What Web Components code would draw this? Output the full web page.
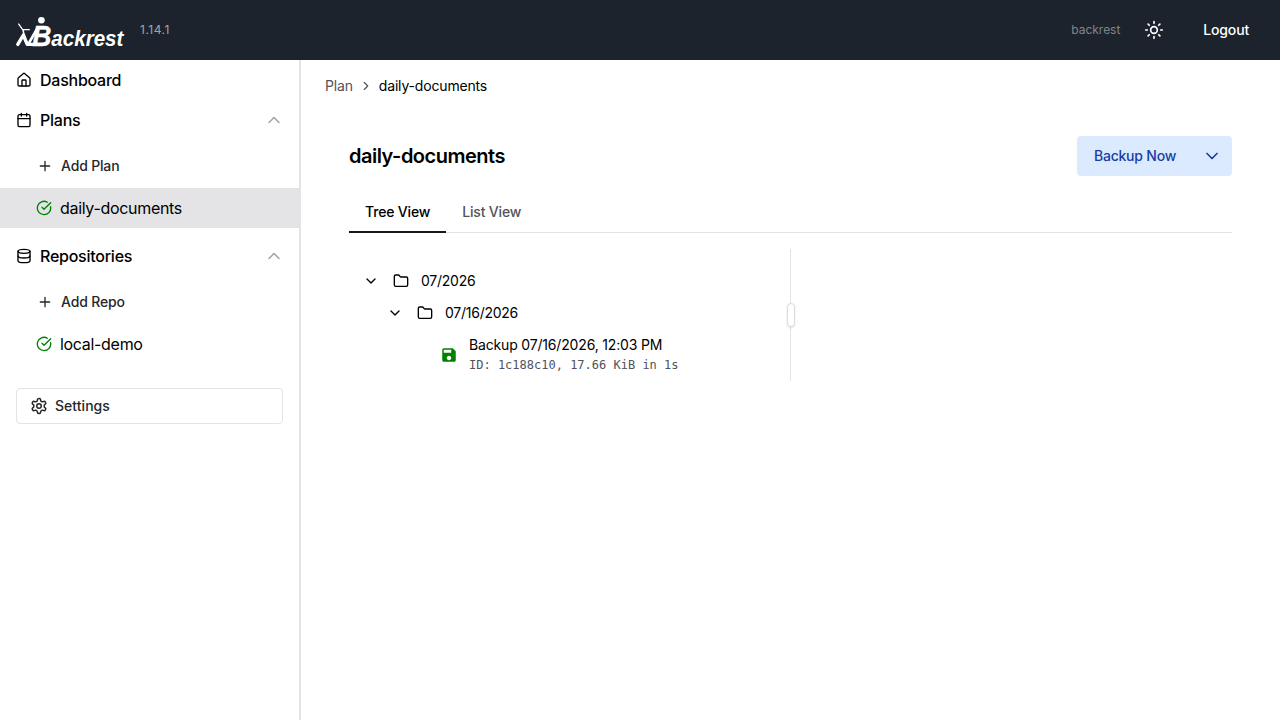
<!DOCTYPE html>
<html lang="en">
<head>
<meta charset="utf-8">
<title>Backrest</title>
<style>
	body {
		margin: 0;
		height: 100vh;
		overflow: hidden;
		background: #fff;
		color: #000;
		font: 400 14px/20px Inter, sans-serif;
		letter-spacing: -.17px;
	}
</style>
</head>
<body>
<br-app></br-app>

<script>
const define = (name, html, setup) => {
	!customElements.get(name) &&
	customElements.define(name, class extends HTMLElement {
		constructor() {
			super();
			this.sr = this.attachShadow({ mode: "open" });
		}

		connectedCallback() {
			this.sr.innerHTML = typeof html === "function" ? html(this) : html;
			setup && setup(this);
		}
	});
};

const icons = {
	house: `<path d="M15 21v-8a1 1 0 0 0-1-1h-4a1 1 0 0 0-1 1v8"/><path d="M3 10a2 2 0 0 1 .709-1.528l7-5.999a2 2 0 0 1 2.582 0l7 5.999A2 2 0 0 1 21 10v9a2 2 0 0 1-2 2H5a2 2 0 0 1-2-2z"/>`,
	calendar: `<path d="M8 2v4M16 2v4"/><rect width="18" height="18" x="3" y="4" rx="2"/><path d="M3 10h18"/>`,
	database: `<ellipse cx="12" cy="5" rx="9" ry="3"/><path d="M3 5v14a9 3 0 0 0 18 0V5"/><path d="M3 12a9 3 0 0 0 18 0"/>`,
	plus: `<path d="M5 12h14M12 5v14"/>`,
	check: `<path d="M21.801 10A10 10 0 1 1 17 3.335"/><path d="m9 11 3 3L22 4"/>`,
	settings: `<path d="M12.22 2h-.44a2 2 0 0 0-2 2v.18a2 2 0 0 1-1 1.73l-.43.25a2 2 0 0 1-2 0l-.15-.08a2 2 0 0 0-2.73.73l-.22.38a2 2 0 0 0 .73 2.73l.15.1a2 2 0 0 1 1 1.72v.51a2 2 0 0 1-1 1.74l-.15.09a2 2 0 0 0-.73 2.73l.22.38a2 2 0 0 0 2.73.73l.15-.08a2 2 0 0 1 2 0l.43.25a2 2 0 0 1 1 1.73V20a2 2 0 0 0 2 2h.44a2 2 0 0 0 2-2v-.18a2 2 0 0 1 1-1.73l.43-.25a2 2 0 0 1 2 0l.15.08a2 2 0 0 0 2.73-.73l.22-.39a2 2 0 0 0-.73-2.73l-.15-.08a2 2 0 0 1-1-1.74v-.5a2 2 0 0 1 1-1.74l.15-.09a2 2 0 0 0 .73-2.73l-.22-.38a2 2 0 0 0-2.73-.73l-.15.08a2 2 0 0 1-2 0l-.43-.25a2 2 0 0 1-1-1.73V4a2 2 0 0 0-2-2z"/><circle cx="12" cy="12" r="3"/>`,
	sun: `<circle cx="12" cy="12" r="4"/><path d="M12 2v2M12 20v2M4.93 4.93l1.41 1.41M17.66 17.66l1.41 1.41M2 12h2M20 12h2M6.34 17.66l-1.41 1.41M19.07 4.93l-1.41 1.41"/>`,
	folder: `<path d="M20 20a2 2 0 0 0 2-2V8a2 2 0 0 0-2-2h-7.9a2 2 0 0 1-1.69-.9L9.6 3.9A2 2 0 0 0 7.93 3H4a2 2 0 0 0-2 2v13a2 2 0 0 0 2 2Z"/>`,
	up: `<path stroke-width="1.8" d="m18 15-6-6-6 6"/>`,
	down: `<path d="m6 9 6 6 6-6"/>`,
	right: `<path d="m9 18 6-6-6-6"/>`,
	save: `<path fill="currentcolor" stroke="none" d="M17 3H5a2 2 0 0 0-2 2v14a2 2 0 0 0 2 2h14c1.1 0 2-.9 2-2V7l-4-4zm-5 16c-1.66 0-3-1.34-3-3s1.34-3 3-3 3 1.34 3 3-1.34 3-3 3zm3-10H5V5h10v4z"/>`,
};

// <br-icon name="plus" size="16">
define("br-icon", (el) => `
	<style>
		:host { display: inline-flex; flex: none; }
		svg {
			display: block;
			fill: none;
			stroke: currentcolor;
			stroke-width: 2;
			stroke-linecap: round;
			stroke-linejoin: round;
		}
	</style>
	<svg viewBox="0 0 24 24" width="${el.getAttribute("size") || 16}" height="${el.getAttribute("size") || 16}">${icons[el.getAttribute("name")]}</svg>
`);

define("br-logo", `
	<style>
		:host { display: block; width: 110px; height: 32px; letter-spacing: 0; }
		svg { display: block; overflow: visible; }
		text { font: italic 700 22.5px "Liberation Sans", Arial, sans-serif; fill: #fff; }
		.big { font-size: 29px; stroke: #fff; stroke-width: .4; }
	</style>
	<svg width="110" height="32" viewBox="0 0 110 32">
		<circle cx="25.4" cy="6.2" r="3.3" fill="#fff"/>
		<path d="M2.4 9.6 6.6 15.6H13.8" fill="none" stroke="#fff" stroke-width="1.3"/>
		<path d="M1.8 30.4 7.4 21 11.2 30.4H18" fill="none" stroke="#fff" stroke-width="3.4" stroke-linecap="round" stroke-linejoin="round"/>
		<path d="M7 15.6 8 21" fill="none" stroke="#fff" stroke-width="1.6"/>
		<path d="M12.4 30 22 13.2H26" fill="none" stroke="#fff" stroke-width="2.6" stroke-linecap="round" stroke-linejoin="round"/>
		<text x="16.2" y="32" textLength="91.2" lengthAdjust="spacingAndGlyphs"><tspan class="big">B</tspan>ackrest</text>
	</svg>
`);

define("br-header", `
	<style>
		:host {
			display: flex;
			align-items: center;
			box-sizing: border-box;
			height: 60px;
			padding: 0 16px;
			background: #1c232c;
			color: #fff;
		}
		small { font-size: 12px; line-height: 16px; color: rgba(255, 255, 255, .6); }
		.version { margin-left: 14px; letter-spacing: .5px; }
		.user { margin-left: auto; letter-spacing: -.02px; color: rgba(255, 255, 255, .45); }
		button {
			display: flex;
			align-items: center;
			justify-content: center;
			height: 36px;
			padding: 0 15px;
			border: none;
			background: none;
			color: inherit;
			font: 500 14px/20px Inter, sans-serif;
			letter-spacing: inherit;
		}
		.theme { width: 36px; padding: 0; margin: 0 16px; }
	</style>
	<br-logo></br-logo>
	<small class="version">1.14.1</small>
	<small class="user">backrest</small>
	<button class="theme"><br-icon name="sun" size="20"></br-icon></button>
	<button><slot></slot></button>
`);

define("br-section", (el) => `
	<style>
		:host { display: block; }
		.head {
			display: flex;
			align-items: center;
			gap: 8px;
			height: 40px;
			padding: 0 15.5px 0 16px;
			font: 500 16px/24px Inter, sans-serif;
			letter-spacing: -.25px;
		}
		.toggle { margin-left: auto; color: #a1a1aa; }
		.body { padding: 8px 0; display: flex; flex-direction: column; gap: 4px; }
	</style>
	<div class="head">
		<br-icon name="${el.getAttribute("icon")}"></br-icon>${el.getAttribute("label")}
		${el.hasAttribute("open") ? `<br-icon class="toggle" name="up" size="20"></br-icon>` : ""}
	</div>
	${el.hasAttribute("open") ? `<div class="body"><slot></slot></div>` : ""}
`);

define("br-add", `
	<style>
		:host {
			display: flex;
			align-items: center;
			gap: 8px;
			height: 36px;
			padding-left: 37px;
			color: #27272a;
			font-weight: 500;
		}
	</style>
	<br-icon name="plus"></br-icon><slot></slot>
`);

define("br-nav-item", `
	<style>
		:host {
			display: flex;
			align-items: center;
			gap: 8px;
			height: 40px;
			padding-left: 36px;
			font-size: 16px;
			line-height: 24px;
			letter-spacing: -.31px;
		}
		:host([selected]) { background: #e4e4e7; }
		br-icon { color: #008000; }
	</style>
	<br-icon name="check"></br-icon><slot></slot>
`);

define("br-sidebar", `
	<style>
		:host {
			display: block;
			box-sizing: border-box;
			flex: none;
			width: 301px;
			border-right: 2px solid #e4e4e7;
		}
		.settings {
			display: flex;
			align-items: center;
			gap: 7px;
			box-sizing: border-box;
			width: calc(100% - 32px);
			height: 36px;
			margin: 16px 16px 0;
			padding: 0 13px;
			border: 1px solid #e4e4e7;
			border-radius: 4px;
			background: #fff;
			color: #27272a;
			font: 500 14px/20px Inter, sans-serif;
			letter-spacing: .04px;
		}
	</style>
	<br-section icon="house" label="Dashboard"></br-section>
	<br-section icon="calendar" label="Plans" open>
		<br-add>Add Plan</br-add>
		<br-nav-item selected>daily-documents</br-nav-item>
	</br-section>
	<br-section icon="database" label="Repositories" open>
		<br-add>Add Repo</br-add>
		<br-nav-item>local-demo</br-nav-item>
	</br-section>
	<button class="settings"><br-icon name="settings" size="18"></br-icon>Settings</button>
`);

define("br-breadcrumb", `
	<style>
		:host { display: flex; align-items: center; gap: 6px; height: 20px; }
		.parent, br-icon { color: #52525b; }
	</style>
	<span class="parent">Plan</span>
	<br-icon name="right" size="14"></br-icon>
	<slot></slot>
`);

define("br-split-button", `
	<style>
		:host { display: flex; }
		button {
			display: flex;
			align-items: center;
			justify-content: center;
			box-sizing: border-box;
			height: 40px;
			padding: 0;
			border: none;
			border-radius: 4px;
			background: #dbeafe;
			color: #173da6;
			font: 500 14px/20px Inter, sans-serif;
			letter-spacing: -.22px;
		}
		.main { width: 116px; border-radius: 4px 1px 1px 4px; }
		.more { width: 39px; padding-right: 2px; border-radius: 1px 4px 4px 1px; }
	</style>
	<button class="main"><slot></slot></button>
	<button class="more"><br-icon name="down" size="20"></br-icon></button>
`);

define("br-tabs", `
	<style>
		:host { display: flex; height: 40px; border-bottom: 1px solid #e4e4e7; }
		::slotted(*) {
			box-sizing: border-box;
			height: 41px;
			padding: 10px 16px;
			font-weight: 500;
			color: #52525b;
		}
		::slotted([aria-selected=true]) { color: #000; border-bottom: 2px solid #18181b; }
	</style>
	<slot></slot>
`, (el) => {
	const tabs = [...el.children];
	tabs.forEach((tab) => {
		tab.addEventListener("click", () => {
			tabs.forEach((t) => t.setAttribute("aria-selected", t === tab));
		});
	});
});

define("br-branch", (el) => `
	<style>
		:host { display: block; }
		.row { display: flex; align-items: center; height: 32px; gap: 14px; }
		.row span { margin-left: -2px; letter-spacing: -.25px; }
		.kids { padding-left: 24px; }
	</style>
	<div class="row">
		<br-icon name="down" size="16"></br-icon>
		<br-icon name="folder"></br-icon>
		<span>${el.getAttribute("label")}</span>
	</div>
	<div class="kids"><slot></slot></div>
`);

define("br-backup", `
	<style>
		:host { display: flex; align-items: center; gap: 11px; padding: 6px 0 6px 29px; }
		br-icon { color: #008000; margin-top: 1px; }
		.meta {
			font: 12px/16px "DejaVu Sans Mono", monospace;
			letter-spacing: 0;
			color: #52525b;
			margin-top: 2px;
			white-space: nowrap;
		}
	</style>
	<br-icon name="save" size="18"></br-icon>
	<div><slot></slot><div class="meta"><slot name="meta"></slot></div></div>
`);

define("br-split-view", `
	<style>
		:host { display: flex; height: 132px; margin-top: 16px; }
		.left { box-sizing: border-box; width: 441px; padding: 16px 14px 0; }
		.bar {
			display: flex;
			align-items: center;
			justify-content: center;
			width: 1px;
			background: #e4e4e7;
		}
		.grip {
			flex: none;
			box-sizing: border-box;
			width: 8px;
			height: 24px;
			margin-left: 1px;
			border: 1px solid #dcdcdf;
			border-radius: 4px;
			background: #fff;
			box-shadow: 0 1px 2px rgba(24, 24, 27, .12);
		}
	</style>
	<div class="left"><slot></slot></div>
	<div class="bar"><div class="grip"></div></div>
`);

define("br-plan", `
	<style>
		:host { display: block; flex: 1; padding: 16px 24px; }
		.view { padding: 40px 24px 0; }
		.title { display: flex; align-items: center; justify-content: space-between; margin-bottom: 16px; }
		h1 { margin: 0; font: 600 20px/30px Inter, sans-serif; letter-spacing: -.5px; }
	</style>
	<br-breadcrumb>daily-documents</br-breadcrumb>
	<div class="view">
		<div class="title">
			<h1>daily-documents</h1>
			<br-split-button>Backup Now</br-split-button>
		</div>
		<br-tabs>
			<div role="tab" aria-selected="true">Tree View</div>
			<div role="tab" aria-selected="false">List View</div>
		</br-tabs>
		<br-split-view>
			<br-branch label="07/2026">
				<br-branch label="07/16/2026">
					<br-backup>Backup 07/16/2026, 12:03 PM<span slot="meta">ID: 1c188c10, 17.66 KiB in 1s</span></br-backup>
				</br-branch>
			</br-branch>
		</br-split-view>
	</div>
`);

define("br-app", `
	<style>
		:host { display: flex; flex-direction: column; height: 100vh; }
		main { display: flex; flex: 1; }
	</style>
	<br-header>Logout</br-header>
	<main>
		<br-sidebar></br-sidebar>
		<br-plan></br-plan>
	</main>
`);
</script>
</body>
</html>
